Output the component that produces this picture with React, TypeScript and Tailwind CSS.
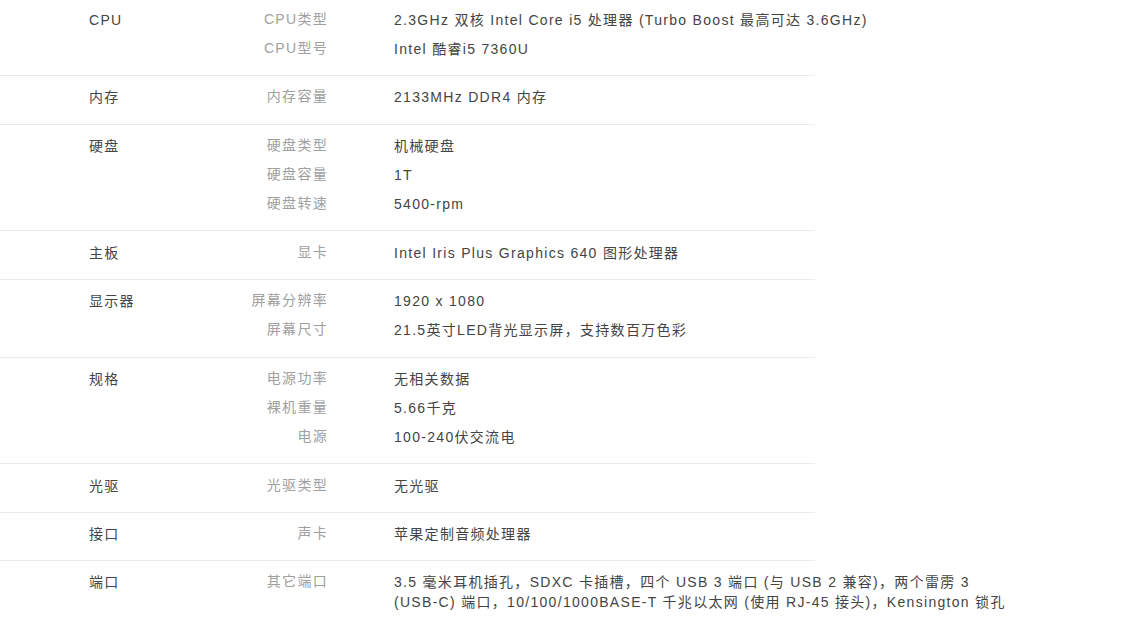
type Spec = {
  group: string;
  items: { key: string; value: string }[];
};

const specs: Spec[] = [
  {
    group: "CPU",
    items: [
      { key: "CPU类型", value: "2.3GHz 双核 Intel Core i5 处理器 (Turbo Boost 最高可达 3.6GHz)" },
      { key: "CPU型号", value: "Intel 酷睿i5 7360U" },
    ],
  },
  { group: "内存", items: [{ key: "内存容量", value: "2133MHz DDR4 内存" }] },
  {
    group: "硬盘",
    items: [
      { key: "硬盘类型", value: "机械硬盘" },
      { key: "硬盘容量", value: "1T" },
      { key: "硬盘转速", value: "5400-rpm" },
    ],
  },
  { group: "主板", items: [{ key: "显卡", value: "Intel Iris Plus Graphics 640 图形处理器" }] },
  {
    group: "显示器",
    items: [
      { key: "屏幕分辨率", value: "1920 x 1080" },
      { key: "屏幕尺寸", value: "21.5英寸LED背光显示屏，支持数百万色彩" },
    ],
  },
  {
    group: "规格",
    items: [
      { key: "电源功率", value: "无相关数据" },
      { key: "裸机重量", value: "5.66千克" },
      { key: "电源", value: "100-240伏交流电" },
    ],
  },
  { group: "光驱", items: [{ key: "光驱类型", value: "无光驱" }] },
  { group: "接口", items: [{ key: "声卡", value: "苹果定制音频处理器" }] },
  {
    group: "端口",
    items: [
      {
        key: "其它端口",
        value:
          "3.5 毫米耳机插孔，SDXC 卡插槽，四个 USB 3 端口 (与 USB 2 兼容)，两个雷雳 3 (USB-C) 端口，10/100/1000BASE-T 千兆以太网 (使用 RJ-45 接头)，Kensington 锁孔",
      },
    ],
  },
];

export default function App() {
  return (
    <div
      className="h-screen bg-white overflow-hidden text-[14px] tracking-[1.3px]"
      style={{ fontFamily: '"Liberation Sans", Arial, "Noto Sans CJK SC", sans-serif' }}
    >
      <div className="w-[815px] -mt-[1.5px]">
        {specs.map((spec, i) => (
          <div
            key={spec.group}
            className={`flex pt-[6.5px] pb-[11.6px] ${i < specs.length - 1 ? "border-b border-[#ebebeb]" : ""}`}
          >
            <div className="w-[200px] shrink-0 pl-[89px] leading-[20px] py-[4.65px] text-[#444]">{spec.group}</div>
            <div className="flex flex-col">
              {spec.items.map((item) => (
                <div key={item.key} className="flex">
                  <div className="w-[128px] shrink-0 text-right leading-[20px] pt-[3.65px] pb-[5.65px] text-[#a0a0a0]">
                    {item.key}
                  </div>
                  <div className="w-[680px] shrink-0 pl-[66px] leading-[20px] py-[4.65px] text-[#444]">
                    {item.value}
                  </div>
                </div>
              ))}
            </div>
          </div>
        ))}
      </div>
    </div>
  );
}
